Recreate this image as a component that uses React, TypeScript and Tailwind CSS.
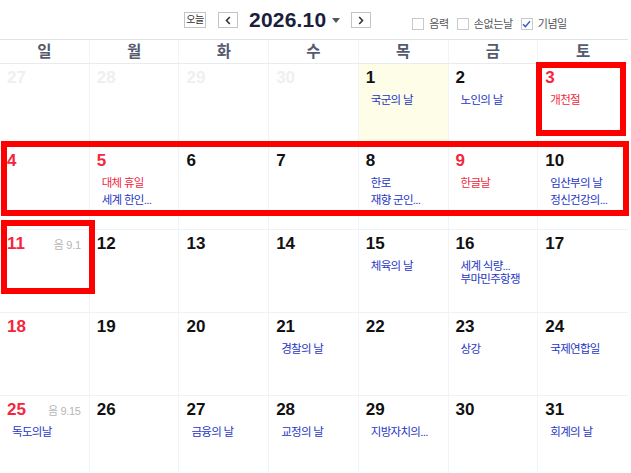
type Ev = { t: string; red?: boolean };
type Day = {
  n: number;
  tone?: "prev" | "red";
  today?: boolean;
  lunar?: string;
  tight?: boolean;
  events?: Ev[];
};

const weeks: Day[][] = [
  [
    { n: 27, tone: "prev" },
    { n: 28, tone: "prev" },
    { n: 29, tone: "prev" },
    { n: 30, tone: "prev" },
    { n: 1, today: true, events: [{ t: "국군의 날" }] },
    { n: 2, events: [{ t: "노인의 날" }] },
    { n: 3, tone: "red", events: [{ t: "개천절", red: true }] },
  ],
  [
    { n: 4, tone: "red" },
    { n: 5, tone: "red", events: [{ t: "대체 휴일", red: true }, { t: "세계 한인..." }] },
    { n: 6 },
    { n: 7 },
    { n: 8, events: [{ t: "한로" }, { t: "재향 군인..." }] },
    { n: 9, tone: "red", events: [{ t: "한글날", red: true }] },
    { n: 10, events: [{ t: "임산부의 날" }, { t: "정신건강의..." }] },
  ],
  [
    { n: 11, tone: "red", lunar: "음 9.1" },
    { n: 12 },
    { n: 13 },
    { n: 14 },
    { n: 15, events: [{ t: "체육의 날" }] },
    { n: 16, tight: true, events: [{ t: "세계 식량..." }, { t: "부마민주항쟁" }] },
    { n: 17 },
  ],
  [
    { n: 18, tone: "red" },
    { n: 19 },
    { n: 20 },
    { n: 21, events: [{ t: "경찰의 날" }] },
    { n: 22 },
    { n: 23, events: [{ t: "상강" }] },
    { n: 24, events: [{ t: "국제연합일" }] },
  ],
  [
    { n: 25, tone: "red", lunar: "음 9.15", events: [{ t: "독도의날" }] },
    { n: 26 },
    { n: 27, events: [{ t: "금융의 날" }] },
    { n: 28, events: [{ t: "교정의 날" }] },
    { n: 29, events: [{ t: "지방자치의..." }] },
    { n: 30 },
    { n: 31, events: [{ t: "회계의 날" }] },
  ],
];

const dayNames = ["일", "월", "화", "수", "목", "금", "토"];

function Checkbox({ label, checked }: { label: string; checked?: boolean }) {
  return (
    <label className="flex items-center gap-[5px]">
      <span className="flex h-[12px] w-[12px] items-center justify-center border border-[#c9c9c9] bg-white">
        {checked && (
          <svg width="9" height="8" viewBox="0 0 9 8" fill="none">
            <path d="M1 4.2 3.4 6.6 8 1.2" stroke="#2e5fc9" strokeWidth="1.4" />
          </svg>
        )}
      </span>
      <span className="text-[11px] leading-[12px] tracking-[-0.4px] text-[#555]">{label}</span>
    </label>
  );
}

function NavButton({ dir }: { dir: "l" | "r" }) {
  return (
    <button className="flex h-[16px] w-[20px] items-center justify-center border border-[#c4c4c4] bg-white">
      <svg width="6" height="9" viewBox="0 0 6 9" fill="none">
        <path
          d={dir === "l" ? "M4.8 1 1.5 4.5l3.3 3.5" : "M1.2 1l3.3 3.5-3.3 3.5"}
          stroke="#333"
          strokeWidth="1.6"
        />
      </svg>
    </button>
  );
}

function Cell({ d, last }: { d: Day; last: boolean }) {
  const numColor =
    d.tone === "prev" ? "text-[#efefef]" : d.tone === "red" ? "text-[#f5263c]" : "text-[#111]";
  return (
    <div
      className={`h-[82px] pl-[7px] pr-[8px] pt-[4px] ${last ? "" : "border-r"} border-[#f0f4f7] ${
        d.today ? "bg-[#fdfde8]" : "bg-white"
      }`}
    >
      <div className="flex items-baseline justify-between">
        <span className={`text-[17px] font-bold leading-[20px] ${numColor}`}>{d.n}</span>
        {d.lunar && <span className="text-[11px] tracking-[-0.3px] text-[#b6b6b6]">{d.lunar}</span>}
      </div>
      {d.events && (
        <div className={`pl-[5px] ${d.tight ? "mt-[6px] leading-[13px]" : "mt-[4px] leading-[17px]"}`}>
          {d.events.map((e) => (
            <div
              key={e.t}
              className={`whitespace-nowrap text-[11.5px] tracking-[-0.7px] ${
                e.red ? "text-[#f2283c]" : "text-[#2536c4]"
              }`}
            >
              {e.t}
            </div>
          ))}
        </div>
      )}
    </div>
  );
}

export default function App() {
  return (
    <div className="relative h-[473px] w-[631px] overflow-hidden bg-white font-['Liberation_Sans','Noto_Sans_CJK_KR',sans-serif]">
      {/* toolbar */}
      <div className="flex h-[39px]">
        <div className="ml-[184px] flex items-start pt-[12px]">
          <button className="flex h-[16px] w-[22px] items-center justify-center border border-[#c4c4c4] bg-white text-[10px] leading-none tracking-[-0.5px] text-[#333]">
            오늘
          </button>
          <div className="ml-[12px]">
            <NavButton dir="l" />
          </div>
          <div className="ml-[11px] -mt-[3px] flex items-center">
            <span className="text-[21px] font-bold leading-[22px] tracking-[0.2px] text-[#1b1e3c]">
              2026.10
            </span>
            <svg className="ml-[6px]" width="8" height="5" viewBox="0 0 8 5">
              <path d="M0 0h8L4 5z" fill="#555" />
            </svg>
          </div>
          <div className="ml-[11px]">
            <NavButton dir="r" />
          </div>
        </div>
        <div className="ml-[41px] flex items-start gap-[8px] pt-[18px]">
          <Checkbox label="음력" />
          <Checkbox label="손없는날" />
          <Checkbox label="기념일" checked />
        </div>
      </div>

      {/* calendar */}
      <div className="w-[628px]">
        <div className="grid grid-cols-7 border-y border-t-[#dfe2e7] border-b-[#e8ecef]">
          {dayNames.map((n, i) => (
            <div
              key={n}
              className={`flex h-[23px] items-center justify-center ${
                i < 6 ? "border-r border-[#f0f4f7]" : ""
              } text-[15.5px] font-bold text-[#555a6e]`}
            >
              {n}
            </div>
          ))}
        </div>
        {weeks.map((w, wi) => (
          <div key={wi} className="grid grid-cols-7 border-b border-[#eef3f6]">
            {w.map((d, i) => (
              <Cell key={i} d={d} last={i === 6} />
            ))}
          </div>
        ))}
      </div>

      {/* annotation boxes */}
      <div className="pointer-events-none absolute left-[536px] top-[62px] h-[74px] w-[90px] border-[6px] border-[#ff0000]" />
      <div className="pointer-events-none absolute left-[1px] top-[141px] h-[75px] w-[628px] border-[6px] border-[#ff0000]" />
      <div className="pointer-events-none absolute left-[1px] top-[220px] h-[74px] w-[94px] border-[6px] border-[#ff0000]" />
    </div>
  );
}
